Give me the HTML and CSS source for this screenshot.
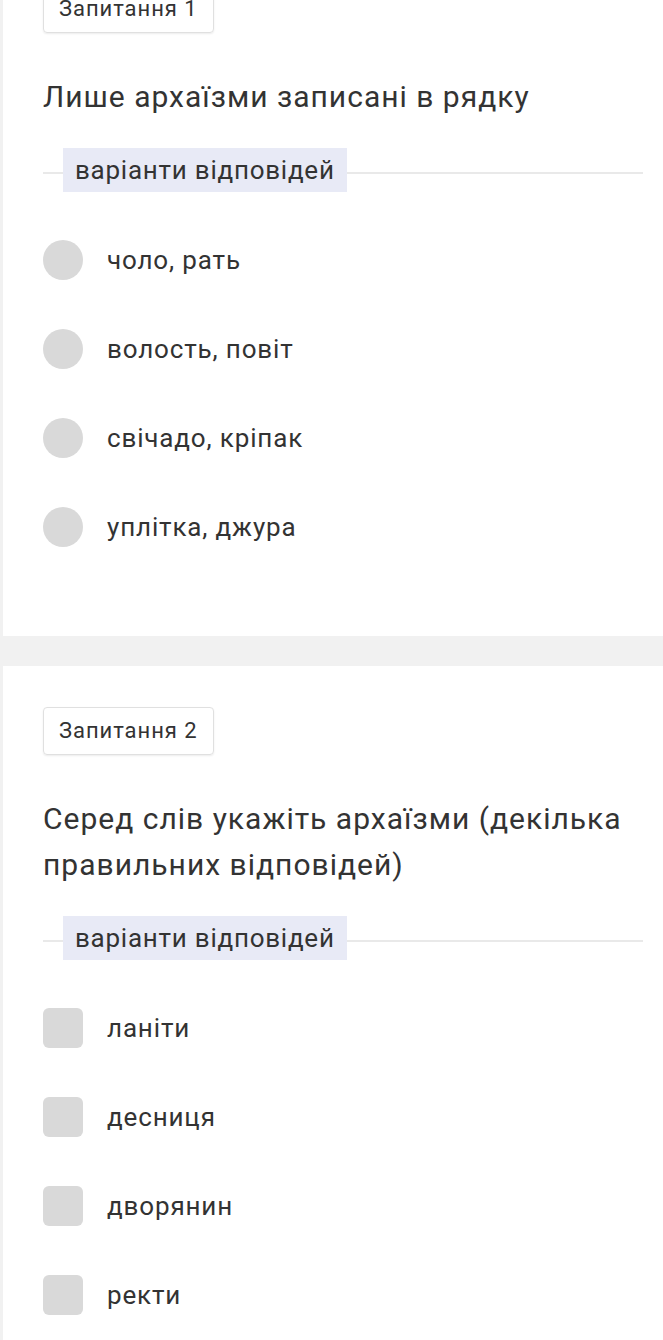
FILE: index.html
```html
<!DOCTYPE html>
<html lang="uk">
<head>
<meta charset="utf-8">
<link rel="stylesheet" href="styles.css">
</head>
<body>
<div class="page">
  <section class="card card-first">
    <div class="qlabel">Запитання 1</div>
    <h2 class="qtext">Лише архаїзми записані в рядку</h2>
    <div class="divider"><span class="pill">варіанти відповідей</span></div>
    <ul class="options">
      <li class="option"><span class="mark radio"></span><span class="otext">чоло, рать</span></li>
      <li class="option"><span class="mark radio"></span><span class="otext">волость, повіт</span></li>
      <li class="option"><span class="mark radio"></span><span class="otext">свічадо, кріпак</span></li>
      <li class="option"><span class="mark radio"></span><span class="otext">уплітка, джура</span></li>
    </ul>
  </section>
  <section class="card">
    <div class="qlabel">Запитання 2</div>
    <h2 class="qtext">Серед слів укажіть архаїзми (декілька правильних відповідей)</h2>
    <div class="divider"><span class="pill">варіанти відповідей</span></div>
    <ul class="options">
      <li class="option"><span class="mark check"></span><span class="otext">ланіти</span></li>
      <li class="option"><span class="mark check"></span><span class="otext">десниця</span></li>
      <li class="option"><span class="mark check"></span><span class="otext">дворянин</span></li>
      <li class="option"><span class="mark check"></span><span class="otext">ректи</span></li>
    </ul>
  </section>
</div>
</body>
</html>
```

FILE: styles.css
```css
html, body {
  margin: 0;
  padding: 0;
  background: #f1f1f1;
  font-family: Roboto, "Noto Sans", sans-serif;
  color: #333;
  overflow: hidden;
}
.page {
  display: flex;
  flex-direction: column;
  gap: 30px;
  margin-top: -56px;
}
.card {
  background: #fff;
  margin-left: 3px;
  padding: 41px 20px 89px 40px;
}
.qlabel {
  display: inline-block;
  box-sizing: border-box;
  height: 48px;
  line-height: 46px;
  padding: 0 15px;
  border: 1px solid #e0e0e0;
  border-radius: 4px;
  box-shadow: 0 1px 2px rgba(0,0,0,0.08);
  font-size: 22px;
  letter-spacing: 0.95px;
  color: #333;
}
.qtext {
  margin: 41px 0 28px;
  font-weight: 400;
  font-size: 30px;
  letter-spacing: 1px;
  line-height: 46px;
  color: #333;
}
.divider {
  display: flex;
  align-items: center;
  height: 44px;
  background: linear-gradient(#e9e9e9, #e9e9e9) left 0 top 24px / 100% 2px no-repeat;
}
.pill {
  margin-left: 20px;
  padding: 0 12px 0 12px;
  height: 44px;
  line-height: 44px;
  background: #e8eaf6;
  font-size: 26px;
  letter-spacing: 0.75px;
  color: #333;
}
.options {
  list-style: none;
  margin: 48px 0 0;
  padding: 0;
  display: flex;
  flex-direction: column;
  gap: 49px;
}
.option {
  display: flex;
  align-items: center;
  gap: 24px;
  height: 40px;
}
.mark {
  width: 40px;
  height: 40px;
  background: #d9d9d9;
  flex: none;
}
.radio { border-radius: 50%; }
.check { border-radius: 6px; }
.otext {
  font-size: 26px;
  letter-spacing: 0.85px;
  color: #333;
}
```
